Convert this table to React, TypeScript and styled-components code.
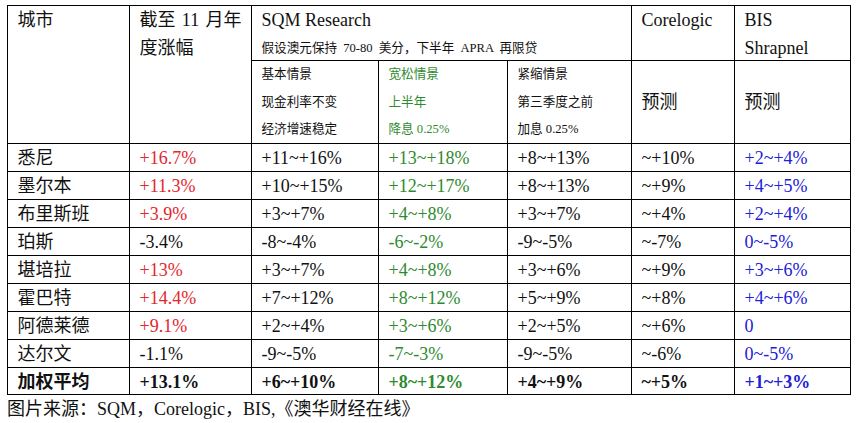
import React from "react";
import styled, { createGlobalStyle } from "styled-components";

const GlobalStyle = createGlobalStyle`
  html, body {
    margin: 0;
    padding: 0;
    background: #ffffff;
  }
  body {
    font-family: "Liberation Serif", "Noto Sans CJK SC", serif;
    color: #111111;
  }
`;

type Tone = "black" | "red" | "green" | "blue";

const toneColor: Record<Tone, string> = {
  black: "#111111",
  red: "#e3262c",
  green: "#2e8a2e",
  blue: "#2020d8",
};

const Page = styled.div`
  padding: 5px 0 0 7px;
`;

const Sheet = styled.div`
  display: grid;
  box-sizing: border-box;
  width: 844px;
  grid-template-columns: 122px 122px 127px 129px 124px 103px 116px;
  grid-template-rows: 55px 83px repeat(8, 28px) 27px;
  border-left: 1px solid #000;
  border-top: 1px solid #000;
`;

const Cell = styled.div<{
  $cols?: number;
  $rows?: number;
  $tone?: Tone;
  $bold?: boolean;
  $small?: boolean;
  $middle?: boolean;
  $lh?: string;
}>`
  box-sizing: border-box;
  grid-column: span ${(p) => p.$cols ?? 1};
  grid-row: span ${(p) => p.$rows ?? 1};
  border-right: 1px solid #000;
  border-bottom: 1px solid #000;
  padding: 0 0 0 9.5px;
  overflow: hidden;
  white-space: nowrap;
  font-size: ${(p) => (p.$small ? "12.6px" : "18px")};
  line-height: ${(p) => p.$lh ?? "28px"};
  color: ${(p) => toneColor[p.$tone ?? "black"]};
  font-weight: ${(p) => (p.$bold ? 700 : 400)};
  display: ${(p) => (p.$middle ? "flex" : "block")};
  align-items: center;
`;

const Line = styled.div<{ $small?: boolean }>`
  font-size: ${(p) => (p.$small ? "12.6px" : "18px")};
  line-height: 28px;
  word-spacing: ${(p) => (p.$small ? "3px" : "0")};
`;

const SpreadLine = styled.div`
  display: flex;
  justify-content: space-between;
  width: 102px;
`;

const Caption = styled.div`
  font-size: 18px;
  line-height: 28px;
  color: #111111;
`;

type Row = {
  city: string;
  ytd: string;
  ytdTone: Tone;
  base: string;
  loose: string;
  tight: string;
  core: string;
  bis: string;
  bold?: boolean;
};

const rows: Row[] = [
  { city: "悉尼", ytd: "+16.7%", ytdTone: "red", base: "+11~+16%", loose: "+13~+18%", tight: "+8~+13%", core: "~+10%", bis: "+2~+4%" },
  { city: "墨尔本", ytd: "+11.3%", ytdTone: "red", base: "+10~+15%", loose: "+12~+17%", tight: "+8~+13%", core: "~+9%", bis: "+4~+5%" },
  { city: "布里斯班", ytd: "+3.9%", ytdTone: "red", base: "+3~+7%", loose: "+4~+8%", tight: "+3~+7%", core: "~+4%", bis: "+2~+4%" },
  { city: "珀斯", ytd: "-3.4%", ytdTone: "black", base: "-8~-4%", loose: "-6~-2%", tight: "-9~-5%", core: "~-7%", bis: "0~-5%" },
  { city: "堪培拉", ytd: "+13%", ytdTone: "red", base: "+3~+7%", loose: "+4~+8%", tight: "+3~+6%", core: "~+9%", bis: "+3~+6%" },
  { city: "霍巴特", ytd: "+14.4%", ytdTone: "red", base: "+7~+12%", loose: "+8~+12%", tight: "+5~+9%", core: "~+8%", bis: "+4~+6%" },
  { city: "阿德莱德", ytd: "+9.1%", ytdTone: "red", base: "+2~+4%", loose: "+3~+6%", tight: "+2~+5%", core: "~+6%", bis: "0" },
  { city: "达尔文", ytd: "-1.1%", ytdTone: "black", base: "-9~-5%", loose: "-7~-3%", tight: "-9~-5%", core: "~-6%", bis: "0~-5%" },
  { city: "加权平均", ytd: "+13.1%", ytdTone: "black", base: "+6~+10%", loose: "+8~+12%", tight: "+4~+9%", core: "~+5%", bis: "+1~+3%", bold: true },
];

export default function App() {
  return (
    <>
      <GlobalStyle />
      <Page>
        <Sheet>
          <Cell $rows={2}>城市</Cell>
          <Cell $rows={2}>
            <SpreadLine>
              <span>截至</span>
              <span>11</span>
              <span>月年</span>
            </SpreadLine>
            <Line>度涨幅</Line>
          </Cell>
          <Cell $cols={3}>
            <Line>SQM Research</Line>
            <Line $small>假设澳元保持 70-80 美分，下半年 APRA 再限贷</Line>
          </Cell>
          <Cell>Corelogic</Cell>
          <Cell>
            <Line>BIS</Line>
            <Line>Shrapnel</Line>
          </Cell>

          <Cell $small $lh="27.6px">
            基本情景
            <br />
            现金利率不变
            <br />
            经济增速稳定
          </Cell>
          <Cell $small $lh="27.6px" $tone="green">
            宽松情景
            <br />
            上半年
            <br />
            降息 0.25%
          </Cell>
          <Cell $small $lh="27.6px">
            紧缩情景
            <br />
            第三季度之前
            <br />
            加息 0.25%
          </Cell>
          <Cell $middle>预测</Cell>
          <Cell $middle>预测</Cell>

          {rows.map((r) => (
            <React.Fragment key={r.city}>
              <Cell $bold={r.bold}>{r.city}</Cell>
              <Cell $bold={r.bold} $tone={r.ytdTone}>{r.ytd}</Cell>
              <Cell $bold={r.bold}>{r.base}</Cell>
              <Cell $bold={r.bold} $tone="green">{r.loose}</Cell>
              <Cell $bold={r.bold}>{r.tight}</Cell>
              <Cell $bold={r.bold}>{r.core}</Cell>
              <Cell $bold={r.bold} $tone="blue">{r.bis}</Cell>
            </React.Fragment>
          ))}
        </Sheet>
        <Caption>图片来源：SQM，Corelogic，BIS,《澳华财经在线》</Caption>
      </Page>
    </>
  );
}
